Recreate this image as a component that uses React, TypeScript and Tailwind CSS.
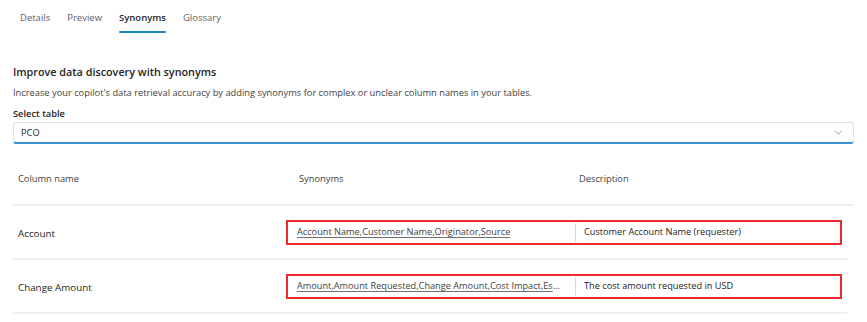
import { ChevronDown } from "lucide-react";

type Row = {
  name: string,
  synonyms: string,
  description: string,
}

const rows: Row[] = [
  { name: "Account", synonyms: "Account Name,Customer Name,Originator,Source", description: "Customer Account Name (requester)" },
  { name: "Change Amount", synonyms: "Amount,Amount Requested,Change Amount,Cost Impact,Estimated Cost", description: "The cost amount requested in USD" },
]

const tabs = ["Details", "Preview", "Synonyms", "Glossary"]

export default function App() {
  return (
    <div className="w-[867px] h-[322px] bg-white overflow-hidden text-[#242424]" style={{ fontFamily: "'Open Sans', 'Noto Sans', sans-serif" }}>
      <div className="flex gap-[17px] pl-[20px] pt-[10px] h-[34px]">
        {tabs.map(t => (
          <div key={t} className={t === "Synonyms" ? "relative text-[9.5px] leading-[15px] font-semibold text-[#242424]" : "relative text-[9.5px] leading-[15px] text-[#616161]"}>
            {t}
            {t === "Synonyms" && <div className="absolute left-0 right-0 top-[21px] h-[2px] bg-[#1b84c2] rounded-full" />}
          </div>
        ))}
      </div>

      <div className="px-[13px] pt-[30px]">
        <h2 className="text-[10.8px] font-semibold leading-[16px] text-[#242424]">Improve data discovery with synonyms</h2>
        <p className="mt-[6px] text-[9.3px] leading-[14px] text-[#424242]">Increase your copilot's data retrieval accuracy by adding synonyms for complex or unclear column names in your tables.</p>
        <div className="mt-[8px] text-[9.3px] font-semibold leading-[12px] text-[#242424]">Select table</div>
        <div className="mt-[2px] h-[22px] flex items-center justify-between pl-[7px] pr-[8px] border border-[#e1e1e1] border-b-2 border-b-[#3a96d0] rounded-[3px]">
          <span className="text-[9.3px] leading-[12px] text-[#242424]">PCO</span>
          <ChevronDown size={13} strokeWidth={1.3} className="text-[#707070]" />
        </div>

        <div className="mt-[24px] flex h-[38px] items-center border-b-2 border-[#f0f0f0] text-[9.3px] leading-[12px] text-[#424242]">
          <div className="w-[273px] pl-[5px] -mt-[14px]">Column name</div>
          <div className="w-[293px] pl-[13px] -mt-[14px]">Synonyms</div>
          <div className="-mt-[14px]">Description</div>
        </div>

        {rows.map(r => (
          <div key={r.name} className="flex h-[54px] items-center border-b-2 border-[#f0f0f0] mr-[7px]">
            <div className="w-[273px] pl-[5px] mt-[3px] text-[9.8px] leading-[12px] text-[#242424]">{r.name}</div>
            <div className="flex w-[556px] h-[25px] border-2 border-[#ec2a2f]">
              <div className="w-[287px] min-w-0 overflow-hidden pl-[9px] pr-[12px] flex items-center">
                <span className="block min-w-0 truncate underline underline-offset-2 decoration-[#707070] text-[9.2px] leading-[14px] text-[#424242]">{r.synonyms}</span>
              </div>
              <div className="flex-1 flex items-center pl-[8px] border-l border-[#d6d6d6] rounded-l-[3px] text-[9.2px] leading-[12px] text-[#242424]">
                {r.description}
              </div>
            </div>
          </div>
        ))}
      </div>
    </div>
  )
}
